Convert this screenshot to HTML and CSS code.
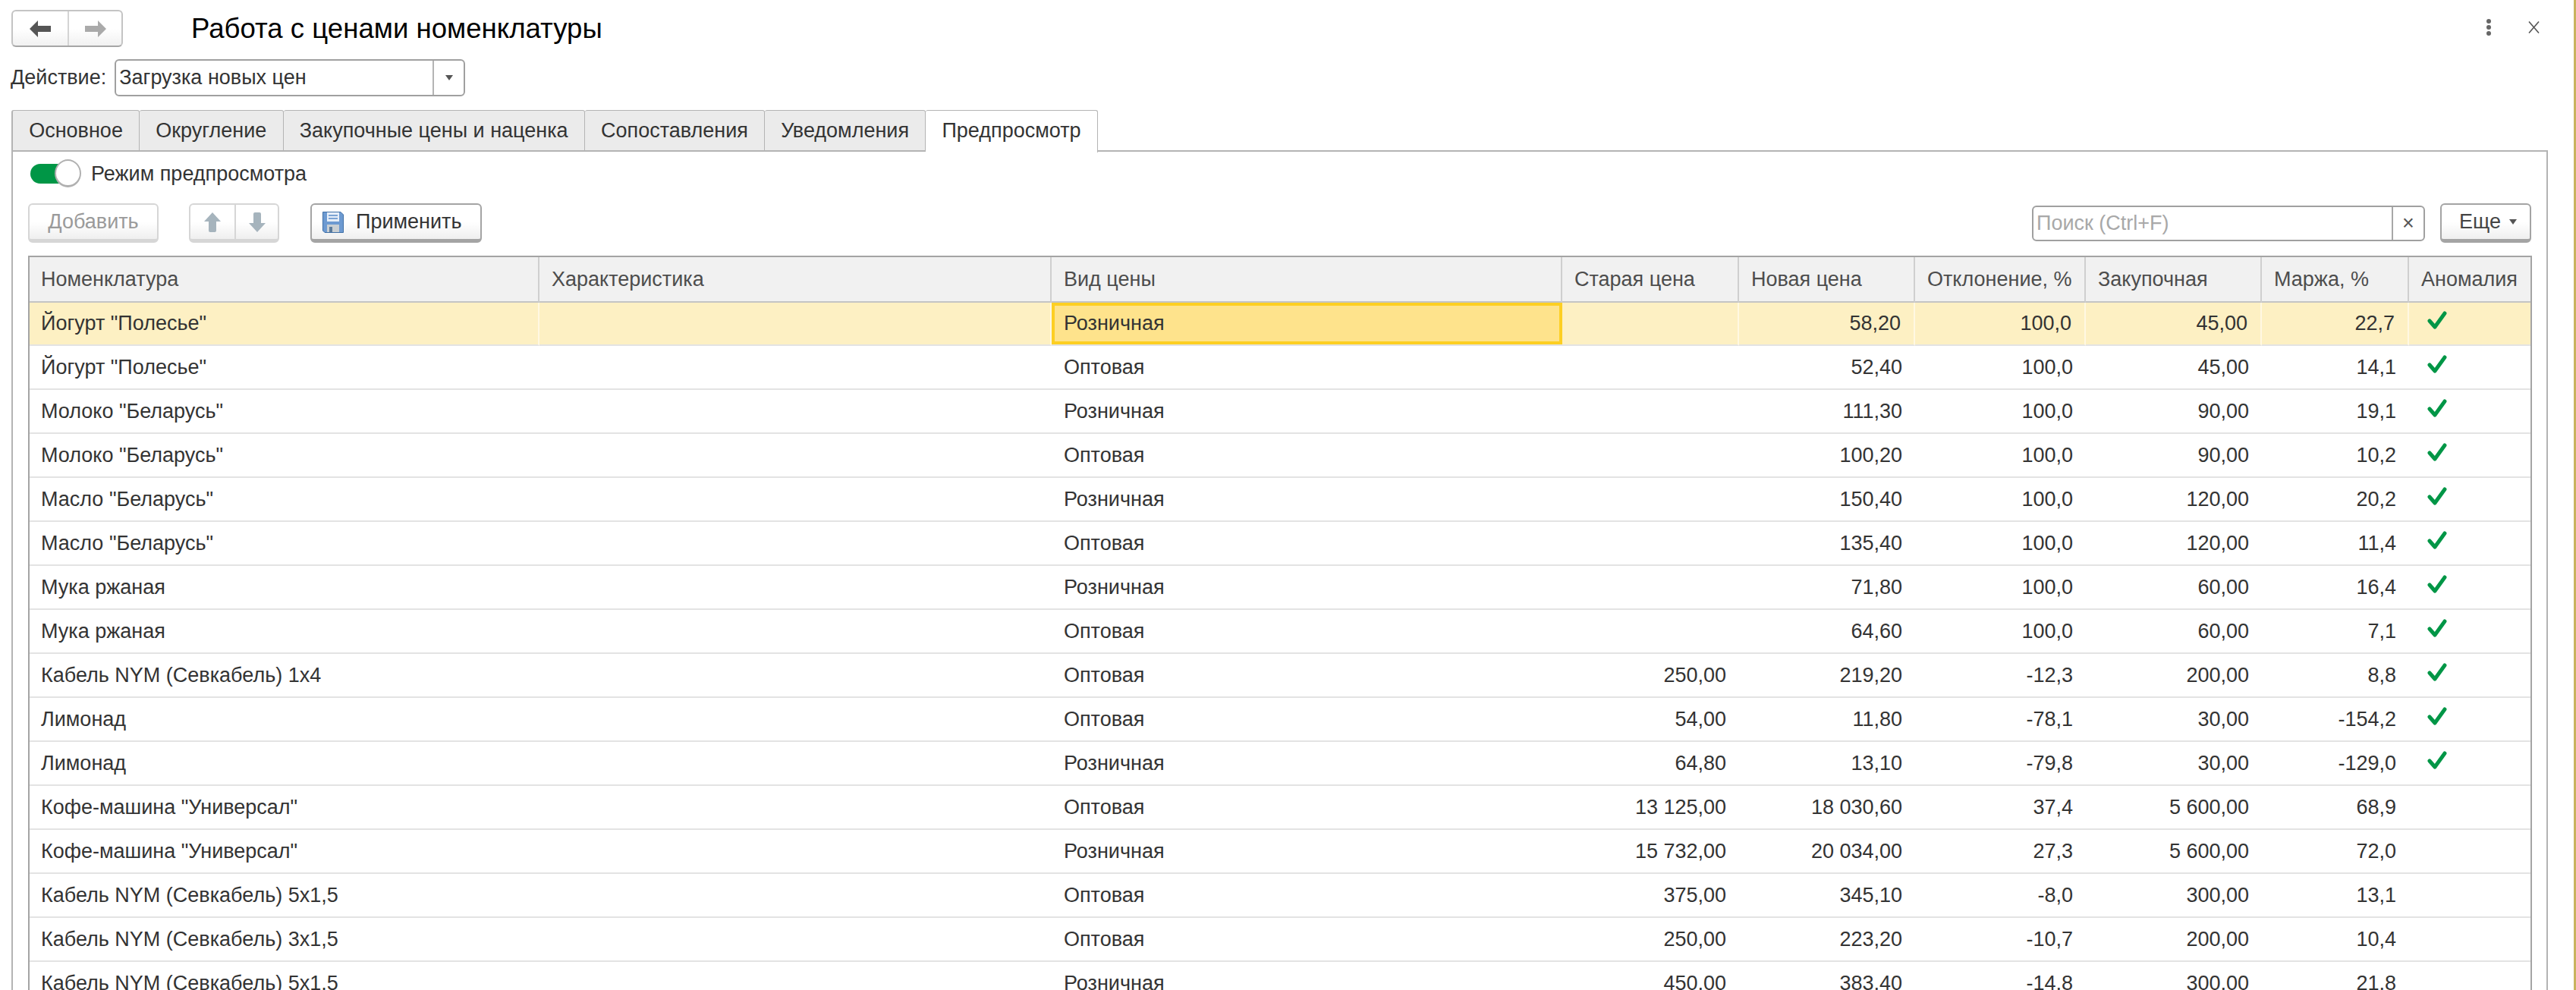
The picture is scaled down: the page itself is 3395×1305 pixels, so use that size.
FILE: index.html
```html
<!DOCTYPE html>
<html lang="ru">
<head>
    <meta charset="UTF-8">
    <title>Работа с ценами номенклатуры</title>
    <link rel="stylesheet" href="styles.css">
</head>
<body>
    <svg class="defs" width="0" height="0">
        <symbol id="check" viewBox="0 0 26 24">
            <path d="M3 13 L10 21 L23 3" fill="none" stroke="#009646" stroke-width="5" stroke-linecap="round" stroke-linejoin="round"/>
        </symbol>
    </svg>
    <div class="app">
        <div class="topbar">
            <div class="nav-btn">
                <span class="nav-part">
                    <svg width="28" height="22" viewBox="0 0 28 22"><path d="M0 11 L11 0 V7 H28 V15 H11 V22 Z" fill="#555"/></svg>
                </span>
                <span class="nav-part nav-part-last">
                    <svg width="28" height="22" viewBox="0 0 28 22"><path d="M28 11 L17 0 V7 H0 V15 H17 V22 Z" fill="#aaa"/></svg>
                </span>
            </div>
            <h1 class="title">Работа с ценами номенклатуры</h1>
            <div class="win-actions">
                <svg width="8" height="24" viewBox="0 0 8 24"><circle cx="4" cy="4" r="3" fill="#666"/><circle cx="4" cy="12" r="3" fill="#666"/><circle cx="4" cy="20" r="3" fill="#666"/></svg>
                <svg width="15" height="16" viewBox="0 0 15 16"><path d="M1 0.5 L14 15.5 M14 0.5 L1 15.5" stroke="#555" stroke-width="1.6" fill="none"/></svg>
            </div>
        </div>

        <div class="action-row">
            <label class="action-label">Действие:</label>
            <div class="select">
                <span class="select-text">Загрузка новых цен</span>
                <span class="select-btn"><i class="caret"></i></span>
            </div>
        </div>

        <div class="tabs">
            <div class="tab">Основное</div>
            <div class="tab">Округление</div>
            <div class="tab">Закупочные цены и наценка</div>
            <div class="tab">Сопоставления</div>
            <div class="tab">Уведомления</div>
            <div class="tab tab-active">Предпросмотр</div>
        </div>

        <div class="panel">
            <div class="toggle-row">
                <div class="toggle"><span class="toggle-knob"></span></div>
                <span class="toggle-label">Режим предпросмотра</span>
            </div>

            <div class="toolbar">
                <div class="btn btn-disabled btn-add">Добавить</div>
                <div class="btn btn-disabled btn-arrows">
                    <span class="arrow-part">
                        <svg width="22" height="26" viewBox="0 0 22 26"><path d="M11 0 L22 12 H16 V24 Q16 26 14 26 H8 Q6 26 6 24 V12 H0 Z" fill="#a6b4bd"/></svg>
                    </span>
                    <span class="arrow-part arrow-part-last">
                        <svg width="22" height="26" viewBox="0 0 22 26"><path d="M11 26 L22 14 H16 V2 Q16 0 14 0 H8 Q6 0 6 2 V14 H0 Z" fill="#a6b4bd"/></svg>
                    </span>
                </div>
                <div class="btn btn-apply">
                    <svg width="28" height="28" viewBox="0 0 28 28">
                        <path d="M0.5 0.5 H24 L27.5 4 V27.5 H3 L0.5 25 Z" fill="#6d9ad1" stroke="#3f6fa6"/>
                        <rect x="6" y="1" width="16" height="12" fill="#e6eef8"/>
                        <path d="M8 5 H20 M8 9 H20" stroke="#7ba3d4" stroke-width="2"/>
                        <rect x="6" y="17" width="16" height="10" fill="#c9cfd3"/>
                        <rect x="9" y="20" width="4" height="7" fill="#5b7b9c"/>
                    </svg>
                    <span>Применить</span>
                </div>
                <div class="search">
                    <span class="search-text">Поиск (Ctrl+F)</span>
                    <span class="search-clear">×</span>
                </div>
                <div class="btn btn-more">Еще <i class="caret"></i></div>
            </div>

            <table class="grid">
                <colgroup>
                    <col class="c-name"><col class="c-char"><col class="c-type"><col class="c-old"><col class="c-new">
                    <col class="c-dev"><col class="c-buy"><col class="c-margin"><col class="c-flag">
                </colgroup>
                <thead>
                    <tr>
                        <th>Номенклатура</th><th>Характеристика</th><th>Вид цены</th><th>Старая цена</th><th>Новая цена</th>
                        <th>Отклонение, %</th><th>Закупочная</th><th>Маржа, %</th><th>Аномалия</th>
                    </tr>
                </thead>
                <tbody>
                    <tr class="row-current">
                        <td>Йогурт "Полесье"</td><td></td><td class="cell-current">Розничная</td><td class="num"></td><td class="num">58,20</td>
                        <td class="num">100,0</td><td class="num">45,00</td><td class="num">22,7</td><td class="flag"><svg class="check"><use href="#check"/></svg></td>
                    </tr>
                    <tr>
                        <td>Йогурт "Полесье"</td><td></td><td>Оптовая</td><td class="num"></td><td class="num">52,40</td>
                        <td class="num">100,0</td><td class="num">45,00</td><td class="num">14,1</td><td class="flag"><svg class="check"><use href="#check"/></svg></td>
                    </tr>
                    <tr>
                        <td>Молоко "Беларусь"</td><td></td><td>Розничная</td><td class="num"></td><td class="num">111,30</td>
                        <td class="num">100,0</td><td class="num">90,00</td><td class="num">19,1</td><td class="flag"><svg class="check"><use href="#check"/></svg></td>
                    </tr>
                    <tr>
                        <td>Молоко "Беларусь"</td><td></td><td>Оптовая</td><td class="num"></td><td class="num">100,20</td>
                        <td class="num">100,0</td><td class="num">90,00</td><td class="num">10,2</td><td class="flag"><svg class="check"><use href="#check"/></svg></td>
                    </tr>
                    <tr>
                        <td>Масло "Беларусь"</td><td></td><td>Розничная</td><td class="num"></td><td class="num">150,40</td>
                        <td class="num">100,0</td><td class="num">120,00</td><td class="num">20,2</td><td class="flag"><svg class="check"><use href="#check"/></svg></td>
                    </tr>
                    <tr>
                        <td>Масло "Беларусь"</td><td></td><td>Оптовая</td><td class="num"></td><td class="num">135,40</td>
                        <td class="num">100,0</td><td class="num">120,00</td><td class="num">11,4</td><td class="flag"><svg class="check"><use href="#check"/></svg></td>
                    </tr>
                    <tr>
                        <td>Мука ржаная</td><td></td><td>Розничная</td><td class="num"></td><td class="num">71,80</td>
                        <td class="num">100,0</td><td class="num">60,00</td><td class="num">16,4</td><td class="flag"><svg class="check"><use href="#check"/></svg></td>
                    </tr>
                    <tr>
                        <td>Мука ржаная</td><td></td><td>Оптовая</td><td class="num"></td><td class="num">64,60</td>
                        <td class="num">100,0</td><td class="num">60,00</td><td class="num">7,1</td><td class="flag"><svg class="check"><use href="#check"/></svg></td>
                    </tr>
                    <tr>
                        <td>Кабель NYM (Севкабель) 1х4</td><td></td><td>Оптовая</td><td class="num">250,00</td><td class="num">219,20</td>
                        <td class="num">-12,3</td><td class="num">200,00</td><td class="num">8,8</td><td class="flag"><svg class="check"><use href="#check"/></svg></td>
                    </tr>
                    <tr>
                        <td>Лимонад</td><td></td><td>Оптовая</td><td class="num">54,00</td><td class="num">11,80</td>
                        <td class="num">-78,1</td><td class="num">30,00</td><td class="num">-154,2</td><td class="flag"><svg class="check"><use href="#check"/></svg></td>
                    </tr>
                    <tr>
                        <td>Лимонад</td><td></td><td>Розничная</td><td class="num">64,80</td><td class="num">13,10</td>
                        <td class="num">-79,8</td><td class="num">30,00</td><td class="num">-129,0</td><td class="flag"><svg class="check"><use href="#check"/></svg></td>
                    </tr>
                    <tr>
                        <td>Кофе-машина "Универсал"</td><td></td><td>Оптовая</td><td class="num">13 125,00</td><td class="num">18 030,60</td>
                        <td class="num">37,4</td><td class="num">5 600,00</td><td class="num">68,9</td><td class="flag"></td>
                    </tr>
                    <tr>
                        <td>Кофе-машина "Универсал"</td><td></td><td>Розничная</td><td class="num">15 732,00</td><td class="num">20 034,00</td>
                        <td class="num">27,3</td><td class="num">5 600,00</td><td class="num">72,0</td><td class="flag"></td>
                    </tr>
                    <tr>
                        <td>Кабель NYM (Севкабель) 5х1,5</td><td></td><td>Оптовая</td><td class="num">375,00</td><td class="num">345,10</td>
                        <td class="num">-8,0</td><td class="num">300,00</td><td class="num">13,1</td><td class="flag"></td>
                    </tr>
                    <tr>
                        <td>Кабель NYM (Севкабель) 3х1,5</td><td></td><td>Оптовая</td><td class="num">250,00</td><td class="num">223,20</td>
                        <td class="num">-10,7</td><td class="num">200,00</td><td class="num">10,4</td><td class="flag"></td>
                    </tr>
                    <tr>
                        <td>Кабель NYM (Севкабель) 5х1,5</td><td></td><td>Розничная</td><td class="num">450,00</td><td class="num">383,40</td>
                        <td class="num">-14,8</td><td class="num">300,00</td><td class="num">21,8</td><td class="flag"></td>
                    </tr>
                </tbody>
            </table>
        </div>
    </div>
</body>
</html>
```

FILE: styles.css
```css
* {
    margin: 0;
    padding: 0;
    box-sizing: border-box;
}
html, body {
    height: 100%;
    overflow: hidden;
    background: #fff;
}
body {
    font-family: "Liberation Sans", Arial, sans-serif;
    font-size: 27px;
    color: #333;
}
.defs {
    position: absolute;
}
.app {
    height: 1305px;
    overflow: hidden;
    border-right: 3px solid #c8b25e;
}
.caret {
    display: inline-block;
    width: 0;
    height: 0;
    border-left: 5px solid transparent;
    border-right: 5px solid transparent;
    border-top: 7px solid #555;
}

/* шапка */
.topbar {
    display: flex;
    align-items: flex-start;
    height: 62px;
    padding: 13px 0 0 15px;
}
.nav-btn {
    display: flex;
    width: 147px;
    height: 49px;
    border: 2px solid #c4c4c4;
    border-bottom-color: #a6a6a6;
    border-radius: 6px;
    background: linear-gradient(#fff 50%, #f1f1f1);
}
.nav-part {
    display: flex;
    align-items: center;
    justify-content: center;
    width: 74px;
    border-right: 2px solid #d4d4d4;
}
.nav-part-last {
    flex: 1;
    border-right: 0;
}
.title {
    margin-left: 90px;
    font-size: 36.6px;
    font-weight: 400;
    line-height: 50px;
    color: #000;
}
.win-actions {
    display: flex;
    align-items: center;
    gap: 48px;
    margin-left: auto;
    padding: 11px 45px 0 0;
}

/* действие */
.action-row {
    display: flex;
    align-items: center;
    gap: 11px;
    height: 49px;
    margin-top: 16px;
    padding-left: 14px;
}
.select {
    display: flex;
    width: 462px;
    height: 49px;
    border: 2px solid #a0a0a0;
    border-radius: 6px;
}
.select-text {
    flex: 1;
    padding-left: 4px;
    line-height: 45px;
    color: #333;
}
.select-btn {
    display: flex;
    align-items: center;
    justify-content: center;
    width: 41px;
    border-left: 2px solid #b4b4b4;
}

/* вкладки */
.tabs {
    display: flex;
    align-items: flex-start;
    height: 54px;
    margin: 18px 0 0 15px;
}
.tab {
    height: 54px;
    padding: 0 21.2px;
    border: 1.5px solid #b4b4b4;
    border-left-width: 0;
    border-radius: 3px 3px 0 0;
    background: #ebebeb;
    line-height: 52px;
    white-space: nowrap;
}
.tab:first-child {
    border-left-width: 2px;
}
.tab-active {
    position: relative;
    z-index: 1;
    height: 56px;
    border-bottom: 0;
    background: #fff;
}

/* панель */
.panel {
    width: 3343px;
    height: 1200px;
    margin: -1px 0 0 15px;
    padding: 0 20px;
    border: 2px solid #b4b4b4;
}
.toggle-row {
    display: flex;
    align-items: center;
    gap: 13px;
    height: 38px;
    margin-top: 10px;
}
.toggle {
    position: relative;
    width: 67px;
    height: 38px;
    margin-left: 3px;
}
.toggle::before {
    content: "";
    position: absolute;
    left: 0;
    top: 6px;
    width: 50px;
    height: 26px;
    border-radius: 13px;
    background: #009646;
}
.toggle-knob {
    position: absolute;
    right: 0;
    top: 0;
    width: 35px;
    height: 37px;
    border: 2px solid #b0b0b0;
    border-bottom-width: 3px;
    border-radius: 50%;
    background: #fff;
}
.toolbar {
    display: flex;
    align-items: center;
    height: 52px;
    margin-top: 20px;
}
.btn {
    display: flex;
    align-items: center;
    justify-content: center;
    height: 52px;
    border: 2px solid #a4a4a4;
    border-bottom-width: 5px;
    border-radius: 6px;
    background: linear-gradient(#fff 50%, #efefef);
    white-space: nowrap;
}
.btn-disabled {
    border-color: #d6d6d6;
    color: #9a9a9a;
}
.btn-add {
    width: 172px;
}
.btn-arrows {
    width: 119px;
    margin-left: 40px;
}
.arrow-part {
    display: flex;
    align-items: center;
    justify-content: center;
    width: 60px;
    height: 100%;
    border-right: 2px solid #d6d6d6;
}
.arrow-part-last {
    flex: 1;
    border-right: 0;
}
.btn-apply {
    justify-content: flex-start;
    gap: 16px;
    width: 226px;
    margin-left: 41px;
    padding-left: 14px;
}
.search {
    display: flex;
    width: 518px;
    height: 47px;
    margin-left: auto;
    border: 2px solid #a0a0a0;
    border-radius: 6px;
}
.search-text {
    flex: 1;
    padding-left: 4px;
    line-height: 43px;
    color: #a8a8a8;
}
.search-clear {
    width: 42px;
    border-left: 2px solid #a8a8a8;
    text-align: center;
    line-height: 42px;
    color: #555;
}
.btn-more {
    gap: 11px;
    width: 120px;
    margin-left: 20px;
    padding-left: 6px;
    color: #444;
}

/* таблица */
.grid {
    width: 3300px;
    margin-top: 17px;
    table-layout: fixed;
    border-collapse: separate;
    border-spacing: 0;
    border-top: 2px solid #a4a4a4;
    border-left: 2px solid #a4a4a4;
    border-right: 2px solid #a4a4a4;
}
.c-name { width: 672px; }
.c-char { width: 675px; }
.c-type { width: 673px; }
.c-old { width: 233px; }
.c-new { width: 232px; }
.c-dev { width: 225px; }
.c-buy { width: 232px; }
.c-margin { width: 194px; }
.c-flag { width: 160px; }
.grid th {
    height: 60px;
    padding: 0 15px 0 16px;
    border-right: 2px solid #cfcfcf;
    border-bottom: 2px solid #c4c4c4;
    background: #f1f1f1;
    font-weight: 400;
    text-align: left;
    color: #4d4d4d;
    white-space: nowrap;
    overflow: hidden;
}
.grid th:last-child {
    border-right: 0;
}
.grid td {
    height: 58px;
    padding: 0 17px 0 16px;
    border-bottom: 2px solid #e3e3e3;
    white-space: nowrap;
    overflow: hidden;
}
.grid th:first-child,
.grid td:first-child {
    padding-left: 15px;
}
.grid td.num {
    text-align: right;
}
.row-current td {
    height: 57px;
    background: #fdf0c3;
    border-right: 2px solid #fff8e2;
}
.row-current td:last-child {
    border-right: 0;
}
.grid td.cell-current {
    background: #fee38c;
    border-right: 0;
    box-shadow: inset 0 0 0 4px #fdcf22;
}
.grid td.flag {
    padding: 0 0 0 24px;
}
.check {
    display: block;
    width: 26px;
    height: 24px;
    margin-bottom: 9px;
}
```
